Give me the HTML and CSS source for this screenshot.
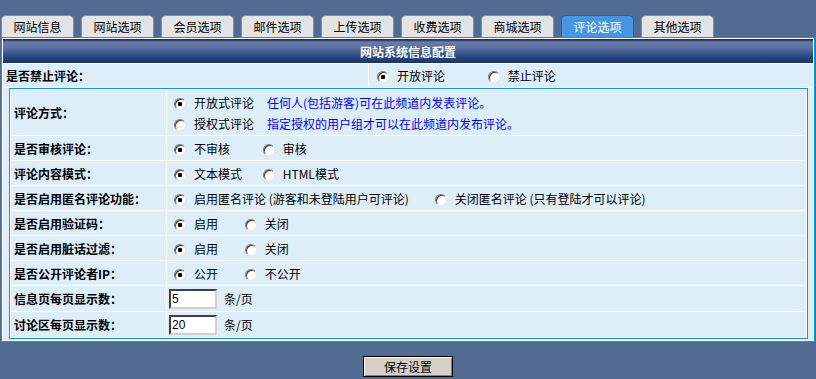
FILE: index.html
```html
<!DOCTYPE html>
<html lang="zh-CN">
<head>
    <meta charset="UTF-8">
    <title>评论选项</title>
    <link rel="stylesheet" href="styles.css">
</head>
<body>
    <div class="tabs">
        <div class="tab">网站信息</div>
        <div class="tab">网站选项</div>
        <div class="tab">会员选项</div>
        <div class="tab">邮件选项</div>
        <div class="tab">上传选项</div>
        <div class="tab">收费选项</div>
        <div class="tab">商城选项</div>
        <div class="tab active">评论选项</div>
        <div class="tab">其他选项</div>
    </div>
    <form class="panel">
        <table class="outer">
            <tr>
                <td class="title" colspan="2">网站系统信息配置</td>
            </tr>
            <tr>
                <td class="label top-label">是否禁止评论：</td>
                <td class="value top-value">
                    <label class="opt w108"><input type="radio" name="forbid" checked>开放评论</label>
                    <label class="opt"><input type="radio" name="forbid">禁止评论</label>
                </td>
            </tr>
            <tr>
                <td class="wrap" colspan="2">
                    <table class="inner">
                        <tr class="tall">
                            <td class="label">评论方式：</td>
                            <td class="value">
                                <div class="line"><label class="opt"><input type="radio" name="mode" checked>开放式评论</label><span class="note">任何人(包括游客)可在此频道内发表评论。</span></div>
                                <div class="line"><label class="opt"><input type="radio" name="mode">授权式评论</label><span class="note">指定授权的用户组才可以在此频道内发布评论。</span></div>
                            </td>
                        </tr>
                        <tr>
                            <td class="label">是否审核评论：</td>
                            <td class="value">
                                <label class="opt w86"><input type="radio" name="audit" checked>不审核</label>
                                <label class="opt"><input type="radio" name="audit">审核</label>
                            </td>
                        </tr>
                        <tr>
                            <td class="label">评论内容模式：</td>
                            <td class="value">
                                <label class="opt w86"><input type="radio" name="format" checked>文本模式</label>
                                <label class="opt"><input type="radio" name="format">HTML模式</label>
                            </td>
                        </tr>
                        <tr>
                            <td class="label">是否启用匿名评论功能：</td>
                            <td class="value">
                                <label class="opt w258"><input type="radio" name="anon" checked>启用匿名评论 (游客和未登陆用户可评论)</label>
                                <label class="opt"><input type="radio" name="anon">关闭匿名评论 (只有登陆才可以评论)</label>
                            </td>
                        </tr>
                        <tr>
                            <td class="label">是否启用验证码：</td>
                            <td class="value">
                                <label class="opt w68"><input type="radio" name="code" checked>启用</label>
                                <label class="opt"><input type="radio" name="code">关闭</label>
                            </td>
                        </tr>
                        <tr>
                            <td class="label">是否启用脏话过滤：</td>
                            <td class="value">
                                <label class="opt w68"><input type="radio" name="filter" checked>启用</label>
                                <label class="opt"><input type="radio" name="filter">关闭</label>
                            </td>
                        </tr>
                        <tr>
                            <td class="label">是否公开评论者IP：</td>
                            <td class="value">
                                <label class="opt w68"><input type="radio" name="ip" checked>公开</label>
                                <label class="opt"><input type="radio" name="ip">不公开</label>
                            </td>
                        </tr>
                        <tr class="num">
                            <td class="label">信息页每页显示数：</td>
                            <td class="value"><input class="count" type="text" value="5"><span class="unit">条/页</span></td>
                        </tr>
                        <tr class="num">
                            <td class="label">讨论区每页显示数：</td>
                            <td class="value"><input class="count" type="text" value="20"><span class="unit">条/页</span></td>
                        </tr>
                    </table>
                </td>
            </tr>
        </table>
        <div class="actions">
            <button type="button" class="save">保存设置</button>
        </div>
    </form>
</body>
</html>
```

FILE: styles.css
```css
body {
    margin: 0;
    background-color: #526b93;
    font-family: "Noto Sans CJK SC", "Liberation Sans", sans-serif;
    font-size: 12px;
    color: #000;
}
.tabs {
    display: flex;
    gap: 7px;
    padding: 15px 0 0 1px;
}
.tab {
    box-sizing: border-box;
    width: 73px;
    height: 22px;
    line-height: 21px;
    text-align: center;
    background: #e4e4e4;
    border: 1px solid #8c8c8c;
    border-bottom: none;
    border-radius: 5px 5px 0 0;
}
.tab.active {
    background: #4796e4;
    border-color: #1c5fcf;
    color: #fff;
}
.panel {
    margin: 0;
}
.outer {
    width: 814px;
    margin: 0 1px;
    border: 1px solid #1296d5;
    border-spacing: 1px;
    background: #fff;
}
.outer td {
    padding: 0;
}
.title {
    height: 24px;
    text-align: center;
    color: #fff;
    font-weight: bold;
    background: linear-gradient(#1c3163 0, #1c3163 1px, #6a7eac 3px, #5a6f9f 9px, #2d4a82 17px, #17326c 24px);
}
.label {
    font-weight: bold;
    background: #ddeef9;
    padding-left: 3px !important;
    white-space: nowrap;
}
.value {
    background: #ddeef9;
    white-space: nowrap;
}
.top-label {
    width: 362px;
    height: 23px;
}
.top-value {
    padding-left: 8px !important;
}
.wrap {
    background: #ddeef9;
    padding: 0 5px 1px 6px !important;
}
.inner {
    width: 100%;
    border: 1px solid #1296d5;
    border-spacing: 1px;
    background: #fff;
}
.inner td {
    height: 24px;
}
.inner .label {
    width: 152px;
}
.inner .value {
    padding-left: 7px;
}
.inner .tall td {
    height: 45px;
}
.inner .num td {
    height: 25px;
}
.inner .num .value {
    padding-left: 2px;
}
.line {
    line-height: 21px;
}
.opt {
    display: inline-block;
}
.w68 { width: 68px; }
.w86 { width: 86px; }
.w108 { width: 108px; }
.w258 { width: 258px; }
.note {
    color: #0000ff;
    margin-left: 13px;
}
input[type="radio"] {
    appearance: none;
    -webkit-appearance: none;
    box-sizing: border-box;
    width: 12px;
    height: 12px;
    margin: 0 8px 0 0;
    vertical-align: -2px;
    border-radius: 50%;
    border: 1px solid;
    border-color: #7a7a7a #e8e8e8 #e8e8e8 #7a7a7a;
    box-shadow: inset 1px 1px 0 #3c3c3c;
    background: #fff;
}
input[type="radio"]:checked {
    background: radial-gradient(circle, #000 0 2px, #fff 2.5px);
}
.count {
    box-sizing: border-box;
    width: 48px;
    height: 20px;
    padding: 0 1px;
    margin: 0;
    font: 12px "Liberation Sans", sans-serif;
    border: 2px solid;
    border-color: #404040 #d4d0c8 #d4d0c8 #404040;
    background: #fff;
    vertical-align: middle;
}
.unit {
    margin-left: 7px;
    vertical-align: middle;
}
.actions {
    text-align: center;
    padding-top: 14px;
}
.save {
    box-sizing: border-box;
    width: 90px;
    height: 21px;
    padding: 0;
    font: 12px "Noto Sans CJK SC", sans-serif;
    background: #d4d0c8;
    border: 1px solid #000;
    box-shadow: inset 1px 1px 0 #fff, inset -1px -1px 0 #808080;
    cursor: pointer;
}
```
